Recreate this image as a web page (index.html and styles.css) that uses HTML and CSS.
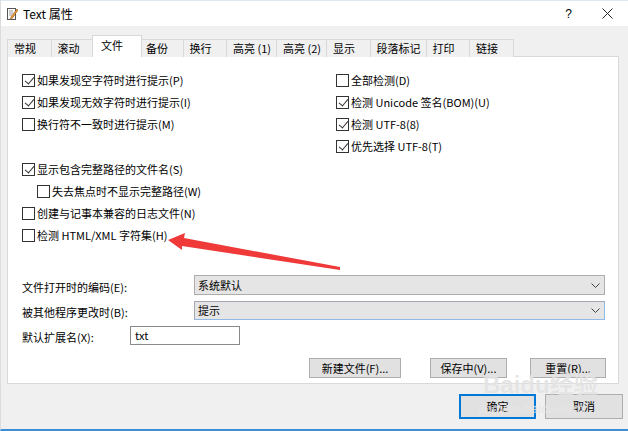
FILE: index.html
```html
<!DOCTYPE html>
<html lang="zh-CN">
<head>
	<meta charset="UTF-8">
	<title>Text 属性</title>
	<link rel="stylesheet" href="styles.css">
</head>
<body>
	<div class="window">
		<div class="titlebar">
			<svg class="app-icon" width="12" height="12" viewBox="0 0 12 12">
				<rect x="1.5" y="0.5" width="8" height="11" fill="#fff" stroke="#555"/>
				<line x1="3" y1="3" x2="7" y2="3" stroke="#999"/>
				<line x1="3" y1="5" x2="7" y2="5" stroke="#999"/>
				<line x1="3" y1="7" x2="6" y2="7" stroke="#999"/>
				<path d="M11 1 L5 9 L4.5 11 L6.5 10 L12 2 Z" fill="#e8a030" stroke="#a05010" stroke-width="0.6"/>
			</svg>
			<span class="title">Text 属性</span>
			<span class="help">?</span>
			<svg class="close" width="11" height="11" viewBox="0 0 11 11">
				<path d="M0.5 0.5 L10.5 10.5 M10.5 0.5 L0.5 10.5" stroke="#222" stroke-width="1"/>
			</svg>
		</div>

		<div class="tabs">
			<div class="tab">常规</div>
			<div class="tab">滚动</div>
			<div class="tab active">文件</div>
			<div class="tab">备份</div>
			<div class="tab">换行</div>
			<div class="tab">高亮 (1)</div>
			<div class="tab">高亮 (2)</div>
			<div class="tab">显示</div>
			<div class="tab">段落标记</div>
			<div class="tab">打印</div>
			<div class="tab">链接</div>
		</div>

		<div class="panel">
			<div class="options">
				<div class="col">
					<label class="check on"><span class="box"></span>如果发现空字符时进行提示(P)</label>
					<label class="check on"><span class="box"></span>如果发现无效字符时进行提示(I)</label>
					<label class="check"><span class="box"></span>换行符不一致时进行提示(M)</label>
					<div class="spacer"></div>
					<label class="check on"><span class="box"></span>显示包含完整路径的文件名(S)</label>
					<label class="check indent"><span class="box"></span>失去焦点时不显示完整路径(W)</label>
					<label class="check"><span class="box"></span>创建与记事本兼容的日志文件(N)</label>
					<label class="check"><span class="box"></span>检测 HTML/XML 字符集(H)</label>
				</div>
				<div class="col">
					<label class="check"><span class="box"></span>全部检测(D)</label>
					<label class="check on"><span class="box"></span>检测 Unicode 签名(BOM)(U)</label>
					<label class="check on"><span class="box"></span>检测 UTF-8(8)</label>
					<label class="check on"><span class="box"></span>优先选择 UTF-8(T)</label>
				</div>
			</div>

			<div class="form">
				<div class="field">
					<span class="label wide">文件打开时的编码(E):</span>
					<div class="combo">系统默认
						<svg class="chevron" width="9" height="5" viewBox="0 0 9 5"><path d="M0.5 0.5 L4.5 4.5 L8.5 0.5" fill="none" stroke="#444"/></svg>
					</div>
				</div>
				<div class="field">
					<span class="label wide">被其他程序更改时(B):</span>
					<div class="combo focus">提示
						<svg class="chevron" width="9" height="5" viewBox="0 0 9 5"><path d="M0.5 0.5 L4.5 4.5 L8.5 0.5" fill="none" stroke="#444"/></svg>
					</div>
				</div>
				<div class="field">
					<span class="label">默认扩展名(X):</span>
					<div class="textbox">txt</div>
				</div>
			</div>

			<div class="buttons">
				<div class="btn new">新建文件(F)...</div>
				<div class="btn save">保存中(V)...</div>
				<div class="btn reset">重置(R)...</div>
			</div>
		</div>

		<div class="footer">
			<div class="btn ok">确定</div>
			<div class="btn cancel">取消</div>
		</div>

		<svg class="arrow" width="628" height="431" viewBox="0 0 628 431">
			<polygon points="168,240 185,233 184,238 340,267 340,270 182,246 182,250" fill="#f03a3a"/>
		</svg>

		<div class="watermark">
			<div class="wm-logo">Baidu经验</div>
			<div class="wm-url">jingyan.baidu.com</div>
		</div>
	</div>
</body>
</html>
```

FILE: styles.css
```css
* {
	margin: 0;
	padding: 0;
	box-sizing: border-box;
}
body {
	width: 628px;
	height: 431px;
	overflow: hidden;
	font-family: "Noto Sans CJK SC", "Liberation Sans", sans-serif;
	font-size: 11px;
	color: #000;
	background: #f0f0f0;
}
.window {
	position: relative;
	width: 628px;
	height: 431px;
	background: #f0f0f0;
	border-left: 1px solid #dcdcdc;
	border-bottom: 2px solid #3b8fd9;
}

/* title bar */
.titlebar {
	height: 26px;
	background: #fff;
	border-top: 1px solid #dde8f3;
	display: flex;
	align-items: center;
	padding-left: 5px;
}
.app-icon {
	margin-right: 5px;
}
.title {
	font-size: 12px;
}
.help {
	margin-left: auto;
	font-family: "Liberation Sans", sans-serif;
	font-size: 12px;
	margin-right: 30px;
}
.close {
	margin-right: 15px;
}

/* tabs */
.tabs {
	display: flex;
	align-items: flex-end;
	height: 22px;
	margin-top: 9px;
	margin-left: 6px;
	margin-bottom: -1px;
}
.tab {
	position: relative;
	height: 18px;
	min-width: 44.5px;
	padding: 0 5px 0 6px;
	line-height: 16px;
	background: #f0f0f0;
	border: 1px solid #d9d9d9;
	border-bottom: none;
	margin-right: -1px;
	white-space: nowrap;
}
.tab.active {
	height: 22px;
	line-height: 18px;
	background: #fff;
	z-index: 1;
	margin-left: -2px;
	margin-right: -3px;
	padding-left: 8px;
	min-width: 50px;
}

/* panel */
.panel {
	margin-left: 6px;
	width: 612px;
	height: 328px;
	background: #fff;
	border: 1px solid #d9d9d9;
	padding: 12px 12px 0 14px;
}
.options {
	display: flex;
	height: 206px;
}
.col {
	display: flex;
	flex-direction: column;
}
.col:first-child {
	width: 314px;
}
.spacer {
	height: 23px;
}
.check {
	display: flex;
	align-items: center;
	height: 22px;
	white-space: nowrap;
}
.check.indent {
	padding-left: 15px;
}
.box {
	position: relative;
	width: 13px;
	height: 13px;
	border: 1px solid #333;
	background: #fff;
	margin-right: 2px;
	flex: none;
}
.check.on .box::after {
	content: "";
	position: absolute;
	left: 3.5px;
	top: 0.5px;
	width: 4px;
	height: 8px;
	border-right: 1.3px solid #333;
	border-bottom: 1.3px solid #333;
	transform: rotate(40deg);
}

/* form */
.form {
	display: flex;
	flex-direction: column;
	gap: 5px;
}
.field {
	display: flex;
	align-items: center;
	height: 20px;
}
.label {
	width: 108px;
	margin-top: 3px;
}
.label.wide {
	width: 172px;
}
.combo {
	width: 411px;
	height: 20px;
	background: #e5e5e5;
	border: 1px solid #adadad;
	padding-left: 3px;
	display: flex;
	align-items: center;
}
.combo.focus {
	height: 19px;
	border-color: #a3a8b4 #8fbbe6 #8fbbe6 #a3a8b4;
}
.chevron {
	margin-left: auto;
	margin-right: 4px;
}
.textbox {
	width: 110px;
	height: 19px;
	border: 1px solid #8a8a8a;
	background: #fff;
	padding-left: 4px;
	line-height: 17px;
}

/* buttons */
.buttons {
	display: flex;
	justify-content: flex-end;
	margin-top: 13px;
}
.btn {
	height: 20px;
	background: #e1e1e1;
	border: 1px solid #adadad;
	text-align: center;
	line-height: 18px;
	white-space: nowrap;
}
.btn.new {
	width: 92px;
}
.btn.save {
	width: 77px;
	margin-left: 29px;
}
.btn.reset {
	width: 76px;
	margin-left: 23px;
}
.footer {
	display: flex;
	justify-content: flex-end;
	gap: 9px;
	margin-top: 10px;
	padding-right: 5px;
}
.footer .btn {
	width: 78px;
	height: 25px;
	line-height: 23px;
}
.btn.ok {
	width: 77px;
	border: 2px solid #0078d7;
	line-height: 21px;
}

/* overlays */
.arrow {
	position: absolute;
	left: -1px;
	top: 0;
	pointer-events: none;
}
.watermark {
	position: absolute;
	left: 482px;
	top: 372px;
	color: rgba(205, 205, 205, 0.5);
	text-shadow: 0 0 1px rgba(255, 255, 255, 0.8);
	pointer-events: none;
}
.wm-logo {
	font-family: "Liberation Sans", "Noto Sans CJK SC", sans-serif;
	font-size: 24px;
	font-weight: bold;
	line-height: 26px;
}
.wm-url {
	font-family: "Liberation Sans", sans-serif;
	font-size: 13px;
	line-height: 14px;
	margin-top: 4px;
	margin-left: -4px;
}
```
